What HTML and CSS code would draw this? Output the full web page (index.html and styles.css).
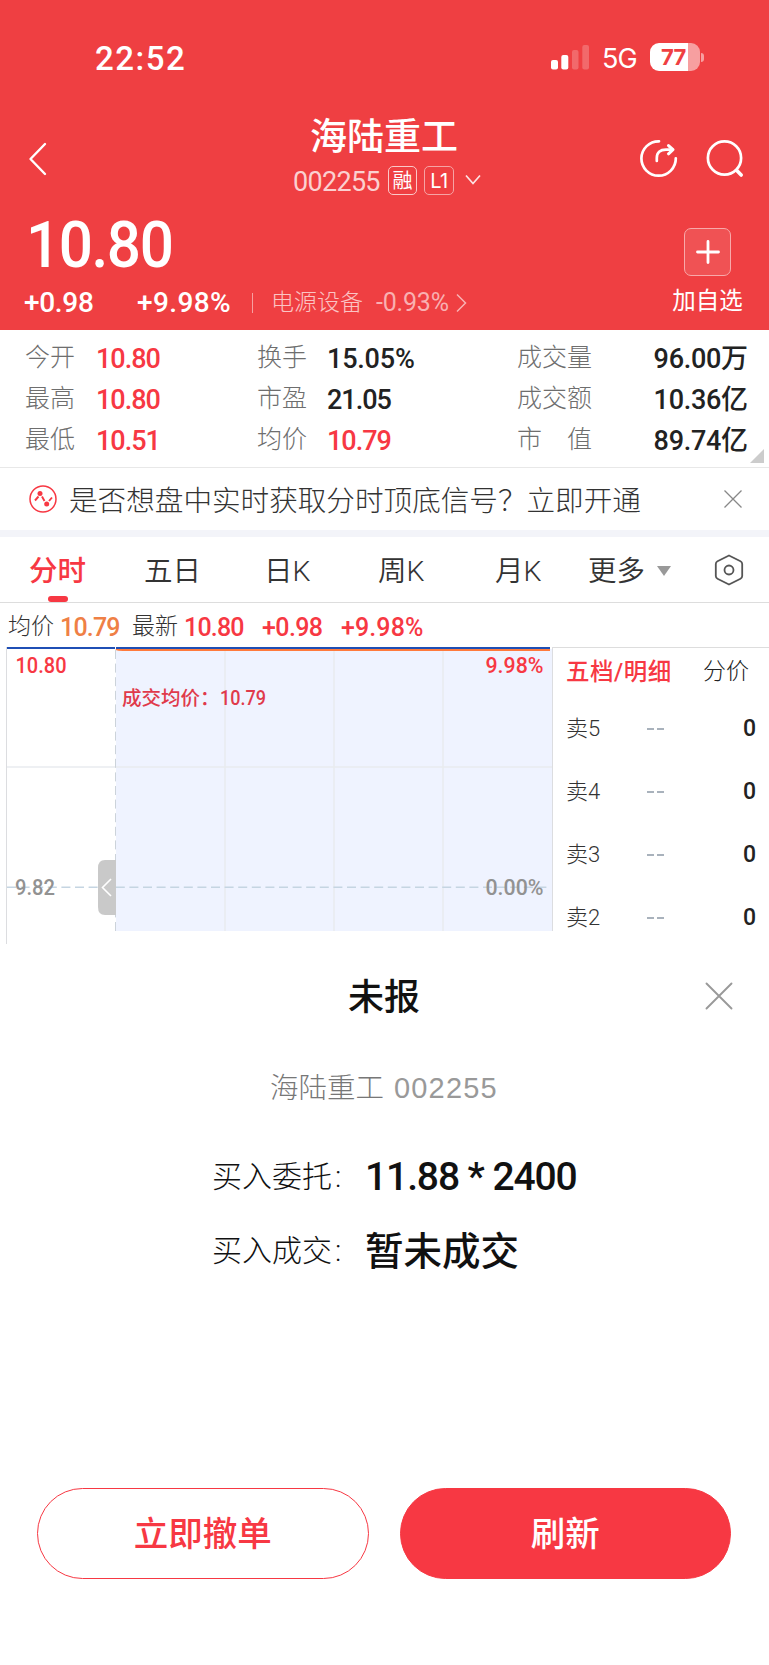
FILE: index.html
```html
<!DOCTYPE html>
<html lang="zh-CN">
<head>
<meta charset="utf-8">
<title>海陆重工 002255</title>
<link rel="stylesheet" href="styles.css">
</head>
<body>
<div class="phone">
  <header class="header">
    <div class="status">
      <span class="clock">22:52</span>
      <div class="status-right">
        <svg class="signal" width="39" height="26" viewBox="0 0 39 26" fill="#fff">
          <rect x="0" y="16" width="7" height="9.500" rx="2"/>
          <rect x="10.300" y="11" width="7" height="14.500" rx="2"/>
          <rect x="21" y="6" width="6.500" height="19.500" rx="2" opacity=".22"/>
          <rect x="31.300" y="1" width="6.700" height="24.500" rx="2" opacity=".22"/>
        </svg>
        <span class="network">5G</span>
        <div class="battery"><span>77</span></div>
        <i class="battery-nub"></i>
      </div>
    </div>
    <div class="navbar">
      <svg class="back" width="20" height="34" viewBox="0 0 20 34" fill="none" stroke="#fff" stroke-width="2.400" stroke-linecap="round" stroke-linejoin="round"><path d="M17 2 2.500 17 17 32"/></svg>
      <div class="title">
        <h1>海陆重工</h1>
        <div class="code">
          <span class="code-num">002255</span>
          <span class="tag">融</span>
          <span class="tag tag-l1">L1</span>
          <svg width="16" height="12" viewBox="0 0 16 12" fill="none" stroke="#fff" stroke-opacity=".85" stroke-width="1.700"><path d="M1 1.500 8 9.500 15 1.500"/></svg>
        </div>
      </div>
      <div class="nav-icons">
        <svg width="40" height="40" viewBox="0 0 40 40" fill="none" stroke="#fff" stroke-width="2.700" stroke-linecap="round" stroke-linejoin="round">
          <path d="M20 2.300A17.200 17.200 0 1 0 36.800 19.300"/>
          <path d="M17.800 22V19C17.800 13.500 21 10.700 27 10.700H33"/>
          <path d="M29.500 6.600 34 10.700 29.500 14.800" stroke-width="3"/>
        </svg>
        <svg width="40" height="40" viewBox="0 0 40 40" fill="none" stroke="#fff" stroke-width="2.700" stroke-linecap="round">
          <circle cx="19.500" cy="19" r="16.600"/><path d="M31.800 31.500 36.200 36" stroke-width="3.600"/>
        </svg>
      </div>
    </div>
    <div class="quote">
      <div class="quote-main">
        <div class="price">10.80</div>
        <div class="change">
          <span class="diff">+0.98</span>
          <span class="pct">+9.98%</span>
          <i class="bar"></i>
          <span class="sector">电源设备</span>
          <span class="sector-pct">-0.93%</span>
          <svg width="11" height="20" viewBox="0 0 11 20" fill="none" stroke="#fff" stroke-opacity=".6" stroke-width="1.500"><path d="M1 1.500 9.500 10 1 18.500"/></svg>
        </div>
      </div>
      <div class="add">
        <div class="add-box"><svg width="24" height="24" viewBox="0 0 24 24" stroke="#fff" stroke-width="2.800" stroke-linecap="round"><path d="M12 1.500V22.500M1.500 12H22.500"/></svg></div>
        <span>加自选</span>
      </div>
    </div>
  </header>

  <section class="stats">
    <span class="label">今开</span><b class="up">10.80</b><span class="label">换手</span><b class="wide">15.05%</b><span class="label">成交量</span><b class="right">96.00<em>万</em></b>
    <span class="label">最高</span><b class="up">10.80</b><span class="label">市盈</span><b>21.05</b><span class="label">成交额</span><b class="right">10.36<em>亿</em></b>
    <span class="label">最低</span><b class="up">10.51</b><span class="label">均价</span><b class="up">10.79</b><span class="label">市&#12288;值</span><b class="right">89.74<em>亿</em></b>
    <i class="corner"></i>
  </section>

  <section class="banner">
    <svg width="28" height="28" viewBox="0 0 28 28" fill="none" stroke="#f73843" stroke-width="1.500">
      <circle cx="14" cy="14" r="13"/>
      <path d="M6 15.500 9.500 11.500M13 11.500 15.500 16M20 16 23 12.500" stroke-width="1.900"/>
      <circle cx="11" cy="8.500" r="2.500" fill="#f73843" stroke="none"/><circle cx="17.700" cy="19" r="2.500" fill="#f73843" stroke="none"/>
    </svg>
    <span>是否想盘中实时获取分时顶底信号？立即开通</span>
    <svg width="18" height="18" viewBox="0 0 18 18" stroke="#888" stroke-width="1.300"><path d="M.5.5 17.500 17.500M17.500.5.5 17.500"/></svg>
  </section>

  <nav class="tabs">
    <span class="tab active">分时</span>
    <span class="tab">五日</span>
    <span class="tab">日K</span>
    <span class="tab">周K</span>
    <span class="tab">月K</span>
    <span class="tab more">更多<i></i></span>
    <svg width="30" height="32" viewBox="0 0 30 32" fill="none" stroke="#555" stroke-width="1.800" stroke-linejoin="round"><path d="M15 1.500 26.500 7.300Q28.200 8.200 28.200 10V22Q28.200 23.800 26.500 24.700L15 30.500 3.500 24.700Q1.800 23.800 1.800 22V10Q1.800 8.200 3.500 7.300Z"/><circle cx="15" cy="16" r="4.500"/></svg>
  </nav>

  <div class="info">
    <span class="name">均价</span><span class="avg">10.79</span><span class="name">最新</span><span class="last">10.80</span><span class="plus">+0.98</span><span class="rate">+9.98%</span>
  </div>

  <section class="market">
    <svg class="chart" width="553" height="297" viewBox="0 0 553 297">
      <path d="M116 2H552V284H116Z" fill="#eff3ff"/>
      <path d="M7 120H552M225 2V284M334 2V284M443 2V284" stroke="#e9ebef" stroke-width="1.500" fill="none"/>
      <path d="M6.500 0V297M552.500 0V284" stroke="#dcdde0"/>
      <path d="M115.500 3V284" stroke="#ccd3da" stroke-dasharray="9 4.600"/>
      <path d="M7 240.300H550" stroke="#c5d5e2" stroke-width="1.400" stroke-dasharray="9 4.600"/>
      <path d="M105 213H116V268H105Q98 268 98 260V221Q98 213 105 213Z" fill="#c9c9c9"/>
      <path d="M111 232 102.500 240.500 111 249" fill="none" stroke="#fff" stroke-width="1.600"/>
      <path d="M116 2Q118 3 123 3H550" stroke="#ff7a3c" stroke-width="2" fill="none"/>
      <path d="M7 1H115M116 1H550" stroke="#1f4fb5" stroke-width="2"/>
      <g class="chart-label">
        <text x="15.500" y="25.500" fill="#f73843" textLength="51" lengthAdjust="spacingAndGlyphs">10.80</text>
        <text x="485.500" y="25.500" fill="#f73843" textLength="58" lengthAdjust="spacingAndGlyphs">9.98%</text>
        <text x="15" y="247.500" fill="#929292" textLength="40" lengthAdjust="spacingAndGlyphs">9.82</text>
        <text x="485.500" y="247.500" fill="#929292" textLength="58" lengthAdjust="spacingAndGlyphs">0.00%</text>
        <text class="deal" x="122" y="58" fill="#e03a4b">成交均价：</text><text class="deal-num" x="220" y="58" fill="#e03a4b" textLength="46" lengthAdjust="spacingAndGlyphs">10.79</text>
      </g>
    </svg>
    <aside class="book">
      <div class="book-head"><b>五档/明细</b><span>分价</span></div>
      <div class="level"><span>卖5</span><i></i><i></i><b>0</b></div>
      <div class="level"><span>卖4</span><i></i><i></i><b>0</b></div>
      <div class="level"><span>卖3</span><i></i><i></i><b>0</b></div>
      <div class="level"><span>卖2</span><i></i><i></i><b>0</b></div>
    </aside>
  </section>

  <section class="sheet">
    <div class="sheet-head">
      <h2>未报</h2>
      <svg width="28" height="28" viewBox="0 0 28 28" stroke="#999" stroke-width="1.900" stroke-linecap="round"><path d="M1.500 1.500 26.500 26.500M26.500 1.500 1.500 26.500"/></svg>
    </div>
    <div class="stock">海陆重工 <span>002255</span></div>
    <div class="order"><span>买入委托<i>:</i></span><b class="num">11.88 * 2400</b></div>
    <div class="order"><span>买入成交<i>:</i></span><b>暂未成交</b></div>
    <div class="actions">
      <div class="btn">立即撤单</div>
      <div class="btn primary">刷新</div>
    </div>
  </section>
</div>
</body>
</html>
```

FILE: styles.css
```css
* { box-sizing: border-box; }
body {
  margin: 0;
  background: #fff;
  font-family: Roboto, "Noto Sans CJK SC", sans-serif;
  color: #222;
  white-space: nowrap;
}
.phone { width: 769px; height: 1665px; overflow: hidden; display: flex; flex-direction: column; }
h1, h2 { margin: 0; font-weight: 500; }
b { font-weight: 500; }
i, em { font-style: normal; }
svg { display: block; flex: none; }

.header { height: 330px; background: #ef3f42; color: #fff; }
.status { height: 114px; padding: 0 65px 0 95px; display: flex; justify-content: space-between; }
.clock { font-size: 33px; font-weight: 500; line-height: 40px; letter-spacing: 1.5px; padding-top: 39px; }
.status-right { display: flex; padding-top: 43px; height: 72px; }
.signal { margin-top: 1px; }
.network { width: 36px; margin-left: 12px; padding-top: 1px; font: 400 27px/29px Inter, sans-serif; letter-spacing: -.8px; }
.battery {
  width: 50px; height: 28px; margin-left: 12px; border-radius: 9px;
  background: linear-gradient(90deg, #fff 38px, #f79fa0 38px);
  color: #ef3f42; font: 700 22px/28px Inter, sans-serif; letter-spacing: -.8px; padding-left: 11px;
}
.battery-nub { width: 3px; height: 9px; margin: 10px 0 0 1px; border-radius: 0 4px 4px 0; background: #f79fa0; }

.navbar { height: 96px; display: flex; padding: 0 24px 0 28px; }
.back { margin-top: 28px; }
.title { flex: 1; padding-left: 245px; }
.title h1 { font-size: 37px; line-height: 44px; height: 44px; padding: 2px 0 0 17px; }
.code { display: flex; align-items: center; height: 44px; }
.code-num { font-size: 27px; letter-spacing: -.7px; color: #fbd0d0; width: 95px; line-height: 44px; padding-top: 3px; }
.tag { width: 29px; height: 29px; border: 1px solid #fbc8c8; border-radius: 5px; font-size: 20px; line-height: 28px; text-align: center; margin-right: 7px; }
.tag-l1 { width: 30px; margin-right: 11px; font-family: Inter, sans-serif; font-size: 20px; letter-spacing: -.5px; border-color: #f6a3a4; }
.nav-icons { display: flex; gap: 26px; padding-top: 25px; }

.quote { display: flex; justify-content: space-between; padding-right: 24px; }
.price { width: 160px; height: 68px; font-size: 64px; font-weight: 500; line-height: 71px; letter-spacing: -1.500px; padding-left: 26px; transform: scaleX(.94); transform-origin: 26px 0; }
.change { display: flex; align-items: center; height: 50px; padding-left: 24px; font-size: 28px; line-height: 50px; font-weight: 500; }
.diff { width: 113px; letter-spacing: -.3px; }
.pct { width: 115px; letter-spacing: .4px; }
.bar { width: 1px; height: 20px; background: #f79fa0; margin-right: 18px; }
.sector { font-size: 23px; font-weight: 300; width: 105px; color: #fbc4c4; }
.sector-pct { font-size: 25px; font-weight: 400; width: 80px; color: #f9b0b1; letter-spacing: -.2px; }
.add { display: flex; flex-direction: column; align-items: center; padding-top: 18px; width: 75px; }
.add-box { width: 47px; height: 48px; border-radius: 7px; border: 1px solid #f8a9aa; background: #f05254; display: grid; place-items: center; }
.add span { font-size: 23.500px; line-height: 50px; }

.stats {
  position: relative; height: 138px; padding: 9px 21px 0 25px; border-bottom: 1px solid #e8e8e8;
  display: grid; grid-template-columns: 71px 161px 70px 190px 110px 1fr; grid-auto-rows: 41px;
  align-items: center; line-height: 41px;
}
.stats .label { font-size: 25px; font-weight: 300; color: #6e6e6e; padding-bottom: 4px; }
.stats b { font-size: 27px; letter-spacing: -1px; }
.stats .wide { letter-spacing: -.2px; }
.stats .right { letter-spacing: -.3px; }
.stats em { font-size: 27px; letter-spacing: 0; }
.stats .up { color: #f73843; }
.right { text-align: right; }
.corner { position: absolute; right: 5px; bottom: 4px; border: 7.500px solid #ccc; border-left-color: transparent; border-top-color: transparent; }

.banner { height: 62px; padding: 0 27px 0 29px; display: flex; align-items: center; font-size: 28.600px; font-weight: 300; color: #333; }
.banner span { margin-left: 12px; flex: 1; line-height: 60px; padding-top: 3px; }

.tabs {
  height: 73px; border-top: 7px solid #f3f4f9; border-bottom: 1px solid #ddd; padding: 0 25px 0 29px;
  display: grid; grid-template-columns: 115px 120px 114px 117px 93px 1fr 30px; align-items: center;
  font-size: 28.500px; color: #333; line-height: 70px;
}
.tab { font-weight: 350; position: relative; height: 65px; }
.tab.active { font-weight: 500; color: #f73843; }
.tab.active::after { content: ""; position: absolute; left: 19px; bottom: 0; width: 20px; height: 6px; border-radius: 3px; background: #f73843; }
.more { display: flex; align-items: flex-start; }
.more i { border: 7px solid transparent; border-top: 10px solid #999; border-bottom: 0; margin: 29px 0 0 12px; }

.info { height: 44px; padding-left: 8px; display: flex; font-size: 25px; line-height: 49px; color: #f73843; letter-spacing: -.8px; font-weight: 500; }
.info .name { font-size: 23px; font-weight: 300; color: #333; width: 52px; letter-spacing: 0; line-height: 47px; }
.info .avg { color: #ef8045; width: 72px; }
.info .last { width: 78px; }
.info .plus { width: 79px; letter-spacing: -.6px; }
.info .rate { letter-spacing: .1px; }

.market { height: 284px; display: flex; }
.chart { overflow: visible; }
.chart-label { font-size: 22px; font-weight: 500; }
.chart .deal { font-size: 19.500px; }
.chart .deal-num { font-size: 20px; }
.book { flex: 1; border-top: 1px solid #ddd; padding: 0 13px 0 13px; }
.book-head { height: 49px; display: flex; justify-content: space-between; padding-right: 7px; font-size: 23px; line-height: 48px; }
.book-head b { color: #f73843; font-size: 23.500px; letter-spacing: .5px; }
.book-head span { font-weight: 300; }
.level { height: 63px; display: flex; align-items: center; font-size: 23px; line-height: 63px; }
.level span { width: 81px; font-size: 22px; font-weight: 300; color: #333; }
.level i { width: 7px; height: 2px; background: #a9b2bc; margin-right: 3px; margin-top: 1px; }
.level b { margin-left: auto; font-size: 23px; }

.sheet { flex: 1; border-radius: 20px 20px 0 0; color: #111; }
.sheet-head { display: flex; justify-content: space-between; align-items: center; height: 130px; padding: 0 36px 0 348px; }
.sheet-head h2 { font-size: 36px; line-height: 130px; padding-top: 4px; }
.stock { font-size: 28.500px; font-weight: 300; color: #777; line-height: 50px; height: 50px; padding: 2px 0 0 270px; }
.stock span { font-family: "Liberation Sans", sans-serif; font-size: 29px; font-weight: 400; letter-spacing: 1.200px; margin-left: 3px; color: #999; }
.order { display: flex; align-items: center; height: 74px; padding-left: 212px; }
.stock + .order { margin-top: 29px; }
.order span { font-size: 30px; font-weight: 300; width: 153px; color: #111; padding-bottom: 7px; }
.order i { margin-left: 3px; }
.order b { font-size: 38.500px; line-height: 74px; height: 74px; }
.order .num { font-size: 39px; letter-spacing: -1.100px; }
.order + .order b { padding-top: 1px; }
.actions { display: flex; gap: 31px; padding: 0 38px 0 37px; margin-top: 200px; }
.btn { flex: 1; height: 91px; border: 1px solid #f73843; border-radius: 46px; text-align: center; font-size: 34.500px; line-height: 91px; font-weight: 500; color: #f73843; }
.primary { background: #f73843; color: #fff; }
```
